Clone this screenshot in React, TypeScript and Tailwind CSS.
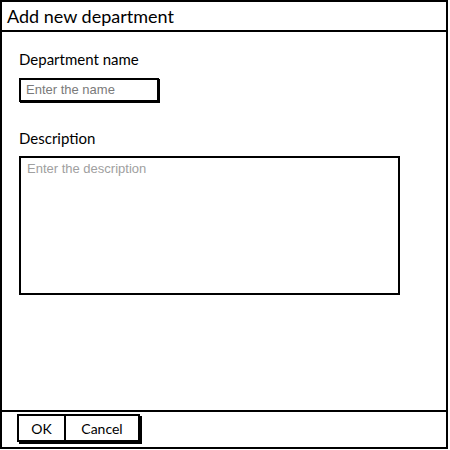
import React from 'react';

const sketch = { fontFamily: '"Lato", "Open Sans", sans-serif' };
const plain = { fontFamily: '"Liberation Sans", Arial, sans-serif' };

export default function App() {
  return (
    <div className="w-[450px] h-[450px] bg-white">
      <div className="w-[448px] h-[449px] border-2 border-black flex flex-col">
        {/* title bar */}
        <div className="h-[30px] border-b-2 border-black flex items-center pl-[5px]">
          <span className="text-[18px] text-black leading-none" style={sketch}>
            Add new department
          </span>
        </div>

        {/* body */}
        <div className="flex-1 flex flex-col pl-[17px] pt-[20px]">
          <label className="text-[15px] text-black leading-none" style={sketch}>
            Department name
          </label>
          <div className="mt-[11px] w-[140px] h-[24px] border-2 border-black flex items-center pl-[5px] shadow-[1px_1px_0_#000]">
            <span className="text-[13px] text-[#7a7a7a]" style={plain}>
              Enter the name
            </span>
          </div>

          <label className="mt-[29px] text-[15px] text-black leading-none" style={sketch}>
            Description
          </label>
          <div className="mt-[10px] w-[381px] h-[139px] border-2 border-black pl-[6px] pt-[3px]">
            <p className="text-[13px] leading-[16px] text-[#a0a0a0]" style={plain}>
              Enter the description
            </p>
          </div>
        </div>

        {/* footer */}
        <div className="h-[37px] border-t-2 border-black flex items-start pl-[15px] pt-[2px]">
          <div className="flex h-[28px] border-2 border-black shadow-[2px_2px_0_#000]">
            <button className="w-[47px] h-full border-r-2 border-black text-[14px] text-black" style={sketch}>
              OK
            </button>
            <button className="w-[72px] h-full text-[14px] text-black" style={sketch}>
              Cancel
            </button>
          </div>
        </div>
      </div>
    </div>
  );
}
